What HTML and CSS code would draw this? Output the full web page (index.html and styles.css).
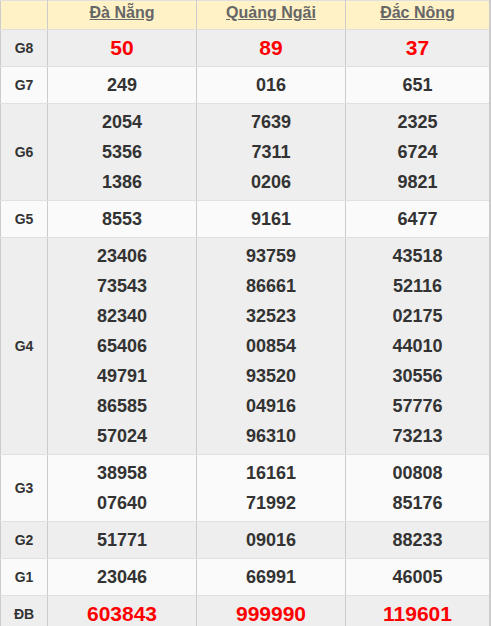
FILE: index.html
```html
<!DOCTYPE html>
<html lang="vi">
<head>
<meta charset="utf-8">
<link rel="stylesheet" href="styles.css">
</head>
<body>
<table class="kq">
  <colgroup><col class="c-label"><col class="c-prov"><col class="c-prov"><col></colgroup>
  <thead>
    <tr class="head">
      <th></th>
      <th><a href="#">Đà Nẵng</a></th>
      <th><a href="#">Quảng Ngãi</a></th>
      <th><a href="#">Đắc Nông</a></th>
    </tr>
  </thead>
  <tbody>
    <tr class="odd"><td class="lbl">G8</td><td class="red">50</td><td class="red">89</td><td class="red">37</td></tr>
    <tr class="even"><td class="lbl">G7</td><td>249</td><td>016</td><td>651</td></tr>
    <tr class="odd"><td class="lbl">G6</td>
      <td><div>2054</div><div>5356</div><div>1386</div></td>
      <td><div>7639</div><div>7311</div><div>0206</div></td>
      <td><div>2325</div><div>6724</div><div>9821</div></td></tr>
    <tr class="even"><td class="lbl">G5</td><td>8553</td><td>9161</td><td>6477</td></tr>
    <tr class="odd"><td class="lbl">G4</td>
      <td><div>23406</div><div>73543</div><div>82340</div><div>65406</div><div>49791</div><div>86585</div><div>57024</div></td>
      <td><div>93759</div><div>86661</div><div>32523</div><div>00854</div><div>93520</div><div>04916</div><div>96310</div></td>
      <td><div>43518</div><div>52116</div><div>02175</div><div>44010</div><div>30556</div><div>57776</div><div>73213</div></td></tr>
    <tr class="even"><td class="lbl">G3</td>
      <td><div>38958</div><div>07640</div></td>
      <td><div>16161</div><div>71992</div></td>
      <td><div>00808</div><div>85176</div></td></tr>
    <tr class="odd"><td class="lbl">G2</td><td>51771</td><td>09016</td><td>88233</td></tr>
    <tr class="even"><td class="lbl">G1</td><td>23046</td><td>66991</td><td>46005</td></tr>
    <tr class="odd"><td class="lbl">ĐB</td><td class="red">603843</td><td class="red">999990</td><td class="red">119601</td></tr>
  </tbody>
</table>
</body>
</html>
```
FILE: styles.css
```css
html, body { margin: 0; padding: 0; background: #fff; }
body { font-family: "Liberation Sans", Arial, sans-serif; }
.kq {
  width: 491px;
  border-collapse: collapse;
  table-layout: fixed;
  border: 1px solid #ccc;
  border-right-width: 2px;
}
.c-label { width: 47px; }
.c-prov { width: 149px; }
.kq th, .kq td {
  border: 1px solid #ccc;
  border-top-color: #e0e0e0;
  border-bottom-color: #e0e0e0;
  text-align: center;
  padding: 3px 0;
  font-weight: bold;
  color: #333;
  font-size: 18px;
  line-height: 30px;
}
.kq th {
  background: #fff2c6;
  font-size: 16px;
  line-height: 22px;
  padding: 1px 0 5px;
}
.kq th a { color: #666; text-decoration: underline; }
.odd td { background: #eeeeee; }
.even td { background: #fafafa; }
.kq td.lbl { font-size: 14px; }
.kq td.red { color: #f00; font-size: 21px; }
```
